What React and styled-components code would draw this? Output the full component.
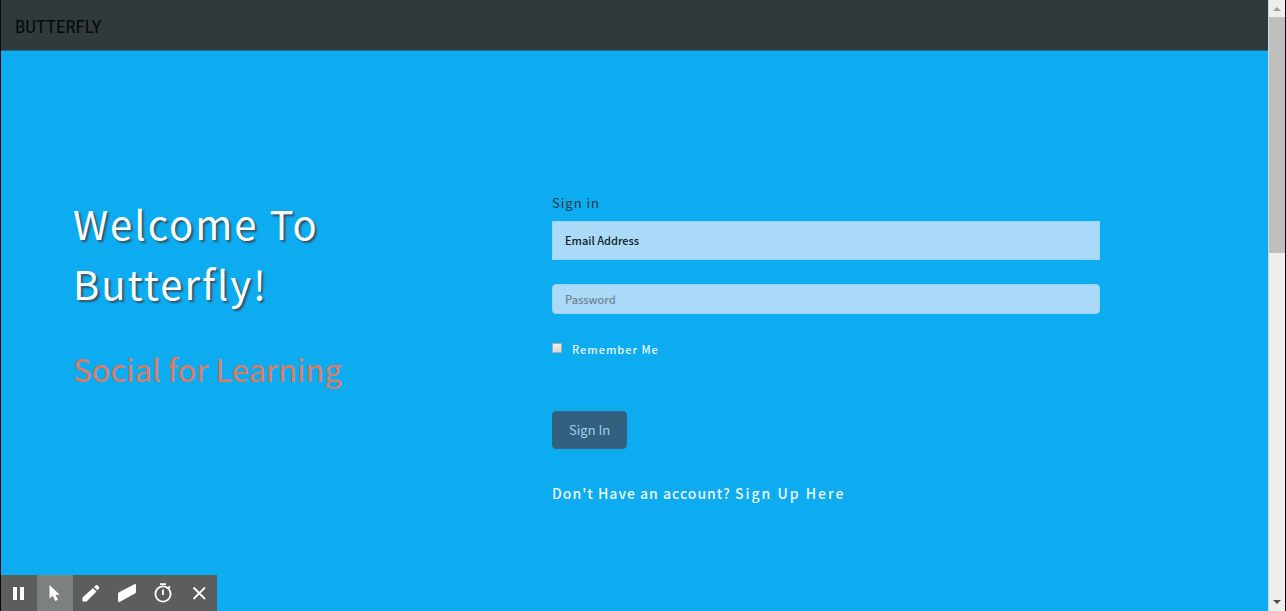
import React from 'react';
import styled, { createGlobalStyle } from 'styled-components';

const GlobalStyle = createGlobalStyle`
  *, *::before, *::after { box-sizing: border-box; }
  body {
    margin: 0;
    background: #0dabf0;
    font-family: "Noto Sans CJK SC", "Noto Sans", sans-serif;
  }
  h1, h2, p { margin: 0; font-weight: 400; }
`;

const Window = styled.div`
  display: flex;
  height: 100vh;
  overflow: hidden;
  border: solid #04090b;
  border-width: 0 1px;
`;

const Page = styled.div`
  flex: 1;
  min-width: 0;
  background: #0dabf0;
`;

const Navbar = styled.header`
  display: flex;
  align-items: center;
  height: 51px;
  padding: 4px 14px 0;
  background: #31393c;
  border-bottom: 1px solid #236a88;
`;

const Brand = styled.a`
  color: #04090b;
  font-family: "Roboto Condensed", "Noto Sans CJK SC", sans-serif;
  font-size: 19px;
  line-height: 24px;
  text-decoration: none;
`;

const Hero = styled.main`
  display: grid;
  grid-template-columns: 479fr 548fr;
  padding: 142px 168px 0 72px;
`;

const Intro = styled.section`
  max-width: 320px;
`;

const Title = styled.h1`
  color: #fff;
  font-size: 40px;
  line-height: 60px;
  letter-spacing: 2px;
  text-shadow: 2px 2px 2px #30536a;
`;

const Tagline = styled.h2`
  margin-top: 26px;
  color: #e07a5f;
  font-size: 31px;
  line-height: 60px;
  white-space: nowrap;
`;

const Form = styled.form`
  display: flex;
  flex-direction: column;
  align-items: flex-start;
`;

const FormLabel = styled.label`
  color: #1f3a48;
  font-size: 13px;
  line-height: 20px;
  letter-spacing: 1px;
  margin-bottom: 8px;
`;

const Field = styled.input`
  width: 100%;
  height: ${(p) => (p.$large ? 39 : 30)}px;
  margin-bottom: 24px;
  padding: 0 12px 1px;
  border: 1px solid #9ad3f7;
  border-radius: ${(p) => (p.$large ? 0 : 4)}px;
  background: #abd9f8;
  color: #10212a;
  font-family: inherit;
  font-size: 11px;
  font-weight: 500;
  outline: none;
  &::placeholder {
    color: ${(p) => (p.$large ? '#10212a' : '#6b8797')};
    opacity: 1;
  }
`;

const Remember = styled.label`
  display: flex;
  align-items: center;
  gap: 10px;
  margin-top: 1px;
  color: #e4f6ff;
  font-size: 11px;
  font-weight: 500;
  line-height: 20px;
  letter-spacing: 1px;
`;

const Checkbox = styled.input`
  appearance: none;
  width: 10px;
  height: 10px;
  margin: 0 0 2px;
  border: 1px solid #a4adb1;
  border-radius: 1px;
  background: linear-gradient(#eeeeee, #d6d6d6);
  &:checked { background: #31607f; }
`;

const SubmitButton = styled.button`
  height: 38px;
  margin: 52px 0 32px;
  padding: 0 16px;
  border: 1px solid #2f6685;
  border-radius: 4px;
  background: #33607f;
  color: #9fd0ea;
  font-family: inherit;
  font-size: 13px;
  line-height: 20px;
`;

const SignUpLine = styled.p`
  color: #e9f8ff;
  font-size: 14px;
  font-weight: 500;
  line-height: 24px;
  letter-spacing: 1px;
  a {
    color: inherit;
    letter-spacing: 2px;
    text-decoration: none;
  }
`;

const Scrollbar = styled.div`
  display: flex;
  flex-direction: column;
  width: 17px;
  flex: none;
  background: #eeeeed;
  border-left: 1px solid #c9d8df;
`;

const ScrollThumb = styled.div`
  flex: 236;
  background: #bfbfbe;
`;

const ScrollTrack = styled.div`
  flex: 341;
`;

const ScrollArrow = styled.svg`
  display: block;
  width: 16px;
  height: 17px;
  flex: none;
`;

const Toolbar = styled.div`
  position: fixed;
  left: 1px;
  bottom: 0;
  display: flex;
  background: #5c5e5d;
`;

const Tool = styled.button`
  display: grid;
  place-items: center;
  width: 36px;
  height: 36px;
  padding: 0;
  border: 0;
  background: ${(p) => (p.$active ? '#7c807e' : 'transparent')};
  svg { display: block; width: 36px; height: 36px; }
`;

const tools = [
  { name: 'Pause', art: <path d="M12 12h4v13h-4zM19 12h4v13h-4z" fill="#fff" /> },
  {
    name: 'Pointer',
    active: true,
    art: <path d="M12.5 10v13.5l3.2-2.7 2.6 5.2 2.6-1.2-2.4-5h4.2z" fill="#fff" />,
  },
  {
    name: 'Pen',
    art: (
      <path
        d="M9.5 26.5v-4L20 13l3.5 3.5L13.5 26.5zM21 12l1.6-1.5q1-1 2 0l1.2 1.2q1 1 0 2l-1.4 1.6z"
        fill="#fff"
      />
    ),
  },
  {
    name: 'Eraser',
    art: <path d="M9 19q0-1 1-1.8L25 9.4q2-1 2 1v6.4q0 1-1 1.8L11 26.7q-2 .9-2-1.2z" fill="#fff" />,
  },
  {
    name: 'Timer',
    art: (
      <g fill="none" stroke="#fff" strokeWidth="1.8">
        <circle cx="18" cy="19" r="7.6" />
        <path d="M15 9.2h6M18 14.5v5.5M23.3 13l1.7-1.7" />
      </g>
    ),
  },
  {
    name: 'Close',
    art: <path d="M12.5 12.5l11.5 11.5M24 12.5l-11.5 11.5" stroke="#fff" strokeWidth="1.8" />,
  },
];

export default function App() {
  return (
    <>
      <GlobalStyle />
      <Window>
        <Page>
          <Navbar>
            <Brand href="#">BUTTERFLY</Brand>
          </Navbar>
          <Hero>
            <Intro>
              <Title>Welcome To Butterfly!</Title>
              <Tagline>Social for Learning</Tagline>
            </Intro>
            <Form onSubmit={(e) => e.preventDefault()}>
              <FormLabel htmlFor="email">Sign in</FormLabel>
              <Field $large id="email" type="email" placeholder="Email Address" />
              <Field type="password" placeholder="Password" aria-label="Password" />
              <Remember>
                <Checkbox type="checkbox" />
                Remember Me
              </Remember>
              <SubmitButton type="submit">Sign In</SubmitButton>
              <SignUpLine>
                Don't Have an account? <a href="#signup">Sign Up Here</a>
              </SignUpLine>
            </Form>
          </Hero>
        </Page>
        <Scrollbar aria-hidden="true">
          <ScrollArrow viewBox="0 0 16 17">
            <path d="M4 11l4-4 4 4z" fill="#a0a19f" />
          </ScrollArrow>
          <ScrollThumb />
          <ScrollTrack />
          <ScrollArrow viewBox="0 0 16 17">
            <path d="M4 6l4 4 4-4z" fill="#4d504e" />
          </ScrollArrow>
        </Scrollbar>
      </Window>
      <Toolbar role="toolbar" aria-label="Recording tools">
        {tools.map((t) => (
          <Tool key={t.name} $active={t.active} aria-label={t.name}>
            <svg viewBox="0 0 36 36">{t.art}</svg>
          </Tool>
        ))}
      </Toolbar>
    </>
  );
}
